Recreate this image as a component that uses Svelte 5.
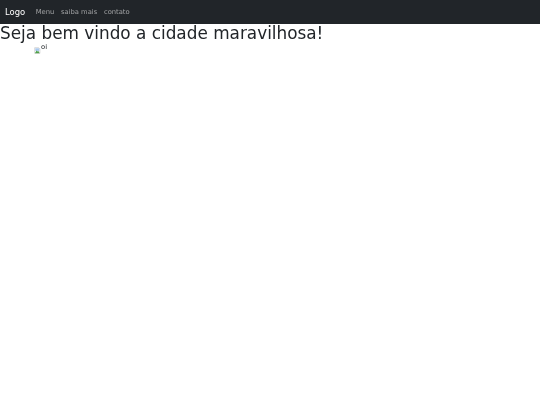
<script>
  const links = ['Menu', 'saiba mais', 'contato'];
</script>

<nav class="navbar">
  <a class="brand" href="#top">Logo</a>
  <ul class="nav">
    {#each links as link}
      <li><a href="#top">{link}</a></li>
    {/each}
  </ul>
</nav>
<h1>Seja bem vindo a cidade maravilhosa!</h1>
<div class="pic">
  <svg viewBox="0 0 16 16">
    <path d="M1.5 1.5h9l3 3v10h-12z" fill="#fff" stroke="#a9a9a9" />
    <rect x="3" y="3" width="9" height="6" fill="#a9c8ee" />
    <path d="M2 14l4-6 2 2 2-1 3 5z" fill="#4fa04a" />
  </svg>
  <span class="alt">oi</span>
</div>

<style>
  :global(body) {
    margin: 0;
    background: #fff;
    font-family: "DejaVu Sans", sans-serif;
    color: #212529;
  }

  .navbar {
    display: flex;
    align-items: center;
    height: 23.6px;
    background: #212529;
    padding: 0 5px;
  }

  .brand {
    color: #fff;
    font-size: 8.44px;
    text-decoration: none;
    margin-right: 10.5px;
    will-change: opacity;
  }

  .nav {
    display: flex;
    gap: 6.75px;
    list-style: none;
    margin: 0;
    padding: 0;
    font-size: 6.75px;
    line-height: 10px;
    will-change: opacity;
  }

  .nav a {
    color: rgba(255, 255, 255, 0.55);
    text-decoration: none;
  }

  h1 {
    margin: 0;
    padding-bottom: 1.25px;
    font-size: 16.88px;
    font-weight: 400;
    line-height: 19px;
    will-change: opacity;
  }

  .pic {
    display: flex;
    align-items: flex-start;
    padding: 0 0 0 34px;
    font-size: 6.75px;
    line-height: 8px;
    will-change: opacity;
  }

  .pic svg {
    width: 7px;
    height: 7px;
    margin-top: 3px;
  }

  .alt {
    margin-top: -1px;
  }
</style>
